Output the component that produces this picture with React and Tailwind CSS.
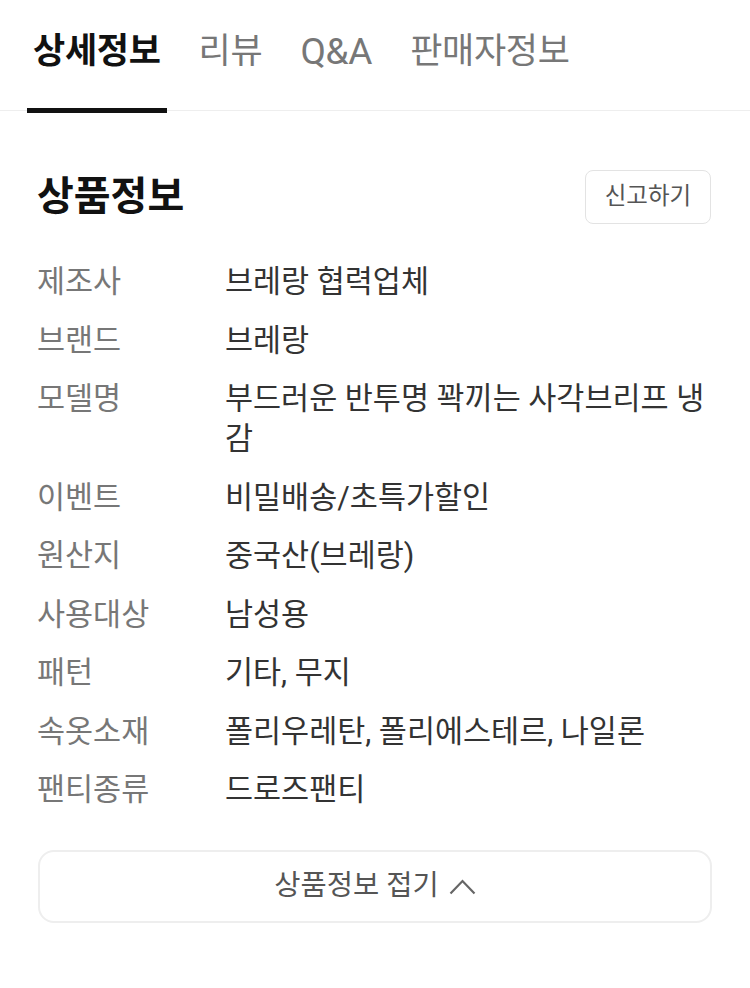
import React from "react";

const rows = [
  ["제조사", "브레랑 협력업체"],
  ["브랜드", "브레랑"],
  ["모델명", "부드러운 반투명 꽉끼는 사각브리프 냉감"],
  ["이벤트", "비밀배송/초특가할인"],
  ["원산지", "중국산(브레랑)"],
  ["사용대상", "남성용"],
  ["패턴", "기타, 무지"],
  ["속옷소재", "폴리우레탄, 폴리에스테르, 나일론"],
  ["팬티종류", "드로즈팬티"],
];

const tabs = ["상세정보", "리뷰", "Q&A", "판매자정보"];

export default function App() {
  return (
    <div
      className="w-[750px] min-h-[988px] bg-white"
      style={{ fontFamily: 'Roboto, "Noto Sans CJK KR", sans-serif' }}
    >
      <div className="flex gap-[26px] pl-[27px] border-b border-[#eeeeee] h-[111px]">
        {tabs.map((t, i) => (
          <div key={t} className="relative px-[6px] pt-[32px]">
            <span
              className={
                "block leading-[40px] tracking-[-0.3px] " +
                (t === "Q&A" ? "text-[37px] " : "text-[35px] ") +
                (i === 0 ? "font-bold text-[#111111]" : "text-[#777777]")
              }
            >
              {t}
            </span>
            {i === 0 && (
              <div className="absolute left-0 right-0 bottom-[-3px] h-[5px] bg-[#111111]" />
            )}
          </div>
        ))}
      </div>

      <div className="px-[37px] pt-[59px]">
        <div className="flex items-center justify-between h-[54px]">
          <h2 className="text-[40px] leading-[48px] font-bold text-[#111111]">상품정보</h2>
          <button className="h-[54px] w-[126px] mr-[2px] rounded-[8px] border border-[#e3e3e3] text-[23.5px] text-[#555555]">
            신고하기
          </button>
        </div>

        <div className="mt-[38px] flex flex-col gap-[18.5px]">
          {rows.map(([k, v]) => (
            <div key={k} className="flex text-[30.5px] leading-[40px]">
              <div className="w-[188px] shrink-0 text-[#777777]">{k}</div>
              <div className="flex-1 text-[#333333]">{v}</div>
            </div>
          ))}
        </div>

        <button className="mt-[40px] w-[674px] ml-[1px] h-[73px] rounded-[16px] border-2 border-[#eeeeee] flex items-center justify-center gap-[10px] text-[28.5px] text-[#555555]">
          <span>상품정보 접기</span>
          <svg width="27" height="16" viewBox="0 0 27 16" fill="none">
            <path d="M1.5 14.5 L13.5 2 L25.5 14.5" stroke="#666666" strokeWidth="2.2" />
          </svg>
        </button>
      </div>
    </div>
  );
}
